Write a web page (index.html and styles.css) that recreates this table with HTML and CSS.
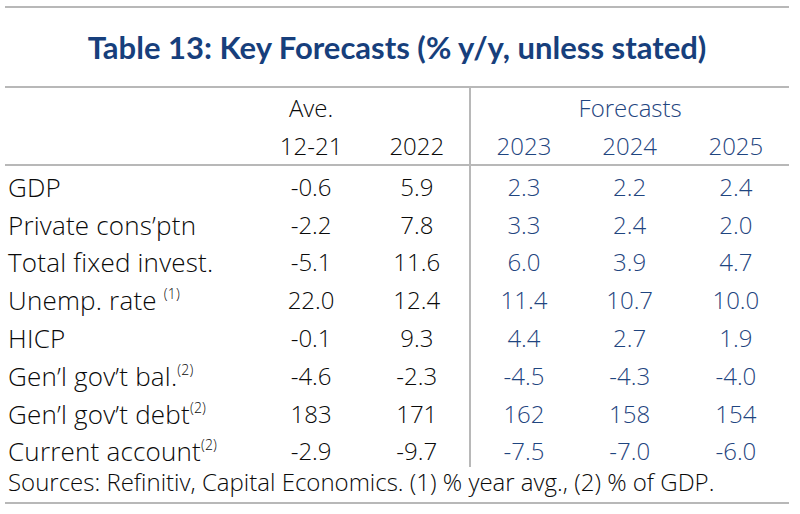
FILE: index.html
```html
<!DOCTYPE html>
<html>
<head>
<meta charset="utf-8">
<link rel="stylesheet" href="styles.css">
</head>
<body>
<div class="panel">
  <div class="title">Table 13: Key Forecasts (% y/y, unless stated)</div>
  <table class="data">
    <colgroup>
      <col class="c-label"><col class="c-num"><col class="c-num"><col class="c-num"><col class="c-num"><col class="c-num">
    </colgroup>
    <thead>
      <tr class="h1">
        <th></th><th>Ave.</th><th></th><th colspan="3" class="fc split">Forecasts</th>
      </tr>
      <tr class="h2">
        <th></th><th>12-21</th><th>2022</th><th class="fc split">2023</th><th class="fc">2024</th><th class="fc">2025</th>
      </tr>
    </thead>
    <tbody>
      <tr><td class="lbl">GDP</td><td>-0.6</td><td>5.9</td><td class="fc split">2.3</td><td class="fc">2.2</td><td class="fc">2.4</td></tr>
      <tr><td class="lbl">Private cons’ptn</td><td>-2.2</td><td>7.8</td><td class="fc split">3.3</td><td class="fc">2.4</td><td class="fc">2.0</td></tr>
      <tr><td class="lbl">Total fixed invest.</td><td>-5.1</td><td>11.6</td><td class="fc split">6.0</td><td class="fc">3.9</td><td class="fc">4.7</td></tr>
      <tr><td class="lbl">Unemp. rate <sup>(1)</sup></td><td>22.0</td><td>12.4</td><td class="fc split">11.4</td><td class="fc">10.7</td><td class="fc">10.0</td></tr>
      <tr><td class="lbl">HICP</td><td>-0.1</td><td>9.3</td><td class="fc split">4.4</td><td class="fc">2.7</td><td class="fc">1.9</td></tr>
      <tr><td class="lbl">Gen’l gov’t bal.<sup>(2)</sup></td><td>-4.6</td><td>-2.3</td><td class="fc split">-4.5</td><td class="fc">-4.3</td><td class="fc">-4.0</td></tr>
      <tr><td class="lbl">Gen’l gov’t debt<sup>(2)</sup></td><td>183</td><td>171</td><td class="fc split">162</td><td class="fc">158</td><td class="fc">154</td></tr>
      <tr><td class="lbl">Current account<sup>(2)</sup></td><td>-2.9</td><td>-9.7</td><td class="fc split">-7.5</td><td class="fc">-7.0</td><td class="fc">-6.0</td></tr>
    </tbody>
  </table>
  <div class="source">Sources: Refinitiv, Capital Economics. (1) % year avg., (2) % of GDP.</div>
</div>
</body>
</html>
```
FILE: styles.css
```css
html, body {
  margin: 0;
  padding: 0;
  background: #ffffff;
}
body {
  font-family: "Open Sans", Lato, sans-serif;
  color: #0a0a0a;
}
.panel {
  width: 784px;
  margin: 6px 0 0 5px;
  border-top: 2px solid #b8b8b8;
  border-bottom: 2px solid #b8b8b8;
}
.title {
  height: 78px;
  display: flex;
  align-items: center;
  justify-content: center;
  font-family: Lato, "Open Sans", sans-serif;
  font-weight: 700;
  font-size: 31px;
  color: #173f7c;
  border-bottom: 2px solid #b8b8b8;
}
.data {
  width: 784px;
  border-collapse: collapse;
  table-layout: fixed;
  font-size: 24px;
  font-weight: 300;
}
.c-label { width: 253px; }
.c-num { width: 106.2px; }
.data th, .data td {
  padding: 0;
  text-align: center;
  font-weight: 300;
  white-space: nowrap;
}
.data thead tr { height: 38.5px; }
.data thead tr.h2 th { border-bottom: 2px solid #b8b8b8; }
.data tbody tr { height: 37.8px; }
.data tbody td {
  line-height: 28px;
  padding-top: 6px;
  vertical-align: middle;
}
.data td.lbl {
  text-align: left;
  padding-left: 3px;
  font-size: 26px;
  letter-spacing: 0.2px;
}
.fc { color: #1f4580; }
.split { border-left: 2px solid #b8b8b8; }
sup {
  font-size: 14px;
  vertical-align: 11px;
  line-height: 0;
}
.source {
  font-size: 24px;
  font-weight: 300;
  line-height: 26px;
  padding: 2px 0 7px 3px;
}
```
